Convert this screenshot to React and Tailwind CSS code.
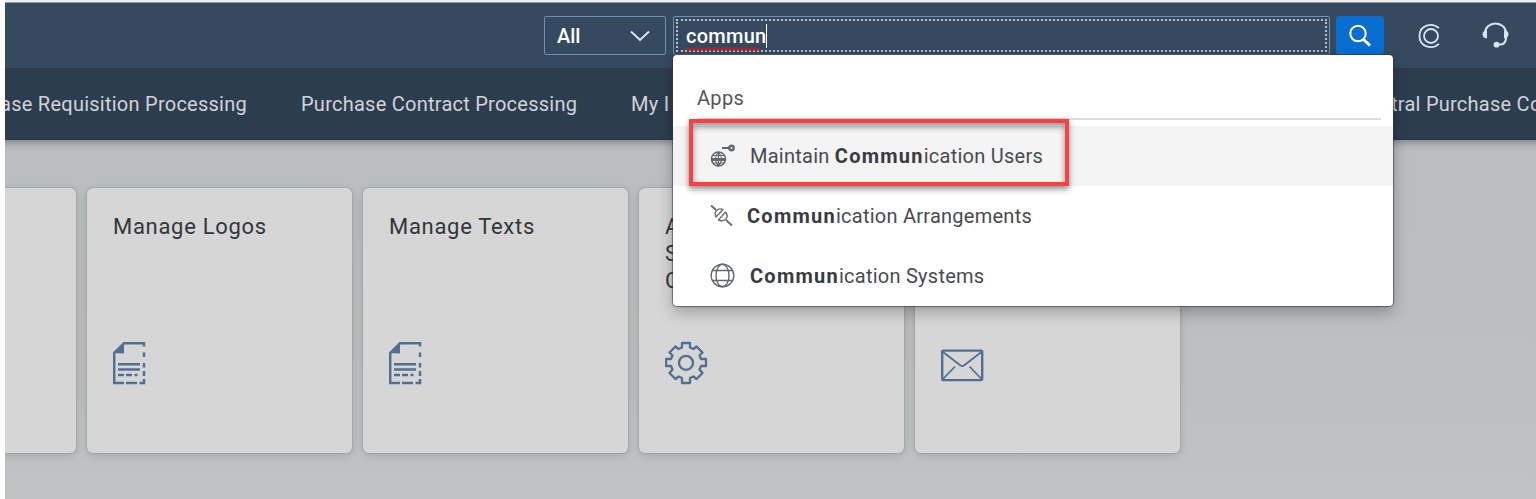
import React from "react";

function DocIcon() {
  return (
    <svg width="44" height="44" viewBox="0 0 44 44" fill="none" stroke="#526f92" strokeWidth="2.5">
      <path d="M31 5.600v-3.300H11L1.200 12v29.900H11" />
      <path d="M0 12 11 1.500v11z" fill="#526f92" stroke="none" />
      <path d="M13 41.900h11M26.500 41.900H31v-4M31 11.500v4.500M31 22v4.500M31 30v5" />
      <path d="M5 23.300h22M5 28.500h22M5 34h6M13 34h6M21.500 34h3" />
    </svg>
  );
}

function GearIcon() {
  return (
    <svg width="44" height="44" viewBox="0 0 44 44" fill="none" stroke="#526f92" strokeWidth="2.300" strokeLinejoin="round">
      <path d="M17 2h8v4.500l3.500 1.500 3-2.500 6 6-3 3L36 18h5v7h-5l-1.500 3.500 3 3.500-6 6-3-2.500L25 37v5h-8v-5l-3.500-1.500-3 2.500-6-6 3-3.500L6 25H1v-7h5l1.500-3.500-3-3 6-6 3 2.500L17 6.500z" />
      <circle cx="21" cy="21.800" r="7" />
    </svg>
  );
}

function MailIcon() {
  return (
    <svg width="44" height="44" viewBox="0 0 44 44" fill="none" stroke="#526f92">
      <rect x="1.200" y="9.600" width="40" height="29.500" rx="1" strokeWidth="2.400" />
      <path d="M2 11l17.500 13.500q1.700 1 3.400 0L40.500 11M2 38l12-12.500M40.500 38L28.500 25.500" strokeWidth="1.800" />
    </svg>
  );
}

function Card({ children, icon }) {
  return (
    <div className="flex h-[265px] w-[265px] shrink-0 flex-col justify-between rounded-[6px] bg-[#d6d6d6] px-[26px] pt-[25px] pb-[68px] shadow-[0_0_1px_1px_rgba(120,125,128,0.22),0_2px_9px_rgba(0,0,0,0.14)]">
      <div className="text-[22px] leading-[27px] tracking-[0.700px] text-[#32363a]">{children}</div>
      <div className="h-[44px]">{icon}</div>
    </div>
  );
}

function Result({ icon, children, className }) {
  return (
    <div className={"flex h-[60px] items-center pl-[37px] text-[20px] tracking-[0.250px] whitespace-nowrap text-[#464b50] " + className}>
      {icon}
      {children}
    </div>
  );
}

function Match({ children }) {
  return <b className="font-bold tracking-[1.250px] text-[#383c40]">{children}</b>;
}

export default function App() {
  return (
    <div className="relative h-[499px] w-[1536px] overflow-hidden bg-white pl-[5px] font-['Roboto',sans-serif]">
      <div className="h-[3px] border-b border-[#929ba5] bg-[#edf0f2]" />
      <header className="flex h-[65px] items-start bg-[#354a5f] pt-[13px] pl-[539px] font-medium text-white">
        <div className="flex h-[39px] w-[122px] items-center justify-between rounded-[2px] border border-[#6f8fb2] pr-[15px] pl-[12px]">
          <span className="text-[20px]">All</span>
          <svg width="20" height="12" viewBox="0 0 20 12" fill="none" stroke="#d9ecf8" strokeWidth="1.800"><path d="M1 1.500l9 8.500 9-8.500" /></svg>
        </div>
        <div className="ml-[7px] h-[39px] w-[657px] rounded-[2px] border border-[#6f8fb2] p-[2px]">
          <div className="flex h-full items-center border-2 border-dotted border-[#b9c3cd] pl-[8px]">
            <span className="relative text-[20px] tracking-[0.250px]">
              commun
              <svg className="absolute bottom-[0px] left-0" width="80" height="4" viewBox="0 0 80 4" fill="none" stroke="#d31820" strokeWidth="1.500"><path d="M0 3l2-2 2 2 2-2 2 2 2-2 2 2 2-2 2 2 2-2 2 2 2-2 2 2 2-2 2 2 2-2 2 2 2-2 2 2 2-2 2 2 2-2 2 2 2-2 2 2 2-2 2 2 2-2 2 2 2-2 2 2 2-2 2 2 2-2 2 2 2-2 2 2 2-2" /></svg>
            </span>
            <span className="h-[24px] w-px bg-white" />
          </div>
        </div>
        <div className="ml-[6px] flex h-[39px] w-[48px] items-center justify-center rounded-[4px] bg-[#0a6ed1]">
          <svg width="24" height="24" viewBox="0 0 24 24" fill="none" stroke="white"><circle cx="10" cy="9.500" r="7.700" strokeWidth="2" /><path d="M15.500 15.500l6.500 6" strokeWidth="3" /></svg>
        </div>
        <svg className="mt-[7px] ml-[33px]" width="26" height="26" viewBox="0 0 26 26" fill="none" stroke="#d3e7f5" strokeWidth="1.800"><path d="M22 5.200C15 -1 2.500 2 2.500 13S15 27 22 20.800" /><circle cx="14" cy="13" r="7" /></svg>
        <svg className="mt-[6px] ml-[38px]" width="28" height="28" viewBox="0 0 28 28" fill="none" stroke="#d3e7f5" strokeWidth="2"><path d="M4 12V11A10.500 9.500 0 0 1 25 11v6q-1 5-5 5.500h-3" /><path d="M1.500 12q0-3 4.500-4v8.500q-4.500-.5-4.500-4.500zM27.500 12q0-3-4.500-4v8.500q4.500-.5 4.500-4.500z" fill="#d3e7f5" stroke="none" /><circle cx="15.500" cy="22.700" r="2.900" fill="#d3e7f5" stroke="none" /></svg>
      </header>
      <nav className="flex h-[72px] items-center overflow-hidden border-b border-[#26384a] bg-[#2d3d50] text-[20px] tracking-[0.250px] whitespace-nowrap text-[#d1d4d6]">
        <div className="flex w-[242px] shrink-0 justify-end">Purchase Requisition Processing</div>
        <div className="ml-[54px] w-[330px] shrink-0">Purchase Contract Processing</div>
        <div className="w-[760px] shrink-0">My I</div>
        <div className="shrink-0">tral Purchase Contracts</div>
      </nav>
      <main className="h-[359px] overflow-hidden bg-linear-to-b from-[#babebf] via-[#bcbec0] to-[#bfc3c4] pt-[48px] shadow-[inset_0_10px_6px_-7px_rgba(80,80,90,0.5)]">
        <div className="-ml-[194px] flex gap-[11px]">
          <Card />
          <Card icon={<DocIcon />}>Manage Logos</Card>
          <Card icon={<DocIcon />}>Manage Texts</Card>
          <Card icon={<GearIcon />}>A<br />S<br />C</Card>
          <Card icon={<MailIcon />} />
        </div>
      </main>

      <div className="absolute top-[55px] left-[673px] h-[251px] w-[720px] rounded-[4px] bg-white shadow-[0_0_1px_1px_rgba(50,50,50,0.6),0_6px_16px_rgba(0,0,0,0.28)]">
        <div className="mr-[12px] ml-[24px] h-[65px] border-b-2 border-[#dedede] pt-[31px] text-[20px] leading-[24px] tracking-[0.300px] text-[#51565b]">Apps</div>
        <div className="pt-[6px]">
          <Result
            className="bg-[#f4f4f4]"
            icon={<svg className="mr-[13px]" width="27" height="26" viewBox="0 0 27 26" fill="none" stroke="#62676c" strokeWidth="1.500"><circle cx="8.500" cy="16" r="7" /><path d="M2.500 12.500h12M2.500 20h12M8.500 9v14M8.500 9q-6 7 0 14M8.500 9q6 7 0 14" strokeWidth="1.100" /><path d="M1 15h15v3H1z" fill="#62676c" stroke="none" /><path d="M12 5h8" strokeWidth="2" /><circle cx="21.500" cy="5" r="2.200" strokeWidth="2.400" /></svg>}
          >
            <span className="whitespace-pre">Maintain <Match>Commun</Match>ication Users</span>
          </Result>
          <Result
            className=""
            icon={<svg className="mr-[10px]" width="27" height="26" viewBox="0 0 27 26" fill="none" stroke="#6a6f74" strokeWidth="1.400"><path d="M1 2.500l5 4.500M16 17L22 22.500" strokeWidth="1.900" /><path d="M6 14Q4 9.500 7 7Q9.500 5 13 6.500zM8.500 17L15.500 9Q18.500 13 16 16Q13 19 8.500 17z" strokeLinejoin="round" /></svg>}
          >
            <span><Match>Commun</Match>ication Arrangements</span>
          </Result>
          <Result
            className=""
            icon={<svg className="mr-[13px]" width="27" height="26" viewBox="0 0 27 26" fill="none" stroke="#62676c" strokeWidth="1.400"><circle cx="12.500" cy="12.500" r="11.300" /><ellipse cx="12.500" cy="12.500" rx="6.500" ry="11.300" /><path d="M2.500 7.500h20M2.500 17.500h20" /></svg>}
          >
            <span><Match>Commun</Match>ication Systems</span>
          </Result>
        </div>
      </div>
      <div className="absolute top-[119px] left-[689px] h-[67px] w-[380px] border-4 border-[#fe4040] shadow-[0_3px_6px_rgba(0,0,0,0.45),inset_0_4px_6px_rgba(0,0,0,0.4)]" />
    </div>
  );
}
